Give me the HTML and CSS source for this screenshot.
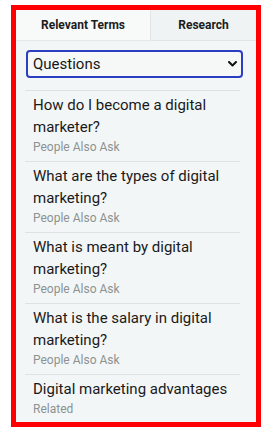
FILE: index.html
```html
<!DOCTYPE html>
<html>
<head>
<meta charset="utf-8">
<link rel="stylesheet" href="styles.css">
</head>
<body>
<div class="frame">
  <div class="panel">
    <div class="tabs">
      <div class="tab active">Relevant Terms</div>
      <div class="tab">Research</div>
    </div>
    <div class="content">
      <div class="select">
        <span>Questions</span>
        <svg class="chev" width="9" height="6" viewBox="0 0 9 6"><path d="M1 1 L4.5 4.5 L8 1" fill="none" stroke="#111" stroke-width="2" stroke-linecap="round" stroke-linejoin="round"/></svg>
      </div>
      <ul class="list">
        <li class="item"><div class="title">How do I become a digital marketer?</div><div class="sub">People Also Ask</div></li>
        <li class="item"><div class="title">What are the types of digital marketing?</div><div class="sub">People Also Ask</div></li>
        <li class="item"><div class="title">What is meant by digital marketing?</div><div class="sub">People Also Ask</div></li>
        <li class="item"><div class="title">What is the salary in digital marketing?</div><div class="sub">People Also Ask</div></li>
        <li class="item"><div class="title">Digital marketing advantages</div><div class="sub">Related</div></li>
      </ul>
    </div>
  </div>
</div>
</body>
</html>
```
FILE: styles.css
```css
html, body {
  margin: 0;
  padding: 0;
  background: #ffffff;
}
body {
  font-family: Roboto, "Liberation Sans", sans-serif;
  width: 272px;
  height: 431px;
  overflow: hidden;
}
.frame {
  margin: 5px 11px 0 11px;
  width: 240px;
  height: 412px;
  border: 5px solid #ff0000;
  overflow: hidden;
}
.panel {
  background: #f3f6f6;
  height: 100%;
}
.tabs {
  display: grid;
  grid-template-columns: 135px 105px;
  height: 31px;
}
.tab {
  display: flex;
  align-items: center;
  justify-content: center;
  font-size: 12px;
  font-weight: 700;
  color: #1c1c1c;
  background: #eff3f3;
  border-bottom: 1px solid #dfe5e5;
}
.tab.active {
  background: #f8fafa;
  border-right: 1px solid #e0e5e5;
  border-bottom: 1px solid #e3e8e8;
}
.content {
  padding: 9px 13px 0 10px;
}
.select {
  height: 24px;
  border: 2px solid #2c3fc2;
  border-radius: 4px;
  background: #f6f8f8;
  display: flex;
  align-items: center;
  justify-content: space-between;
  padding: 0 4px 0 5px;
  font-size: 15px;
  color: #161616;
}
.chev {
  display: block;
}
.list {
  list-style: none;
  margin: 12px 3px 0 -1px;
  padding: 0;
}
.item {
  border-top: 1px solid #dde2e2;
  padding: 3px 0 5px 8px;
}
.title {
  font-size: 15px;
  line-height: 22px;
  color: #1a1a1a;
}
.sub {
  font-size: 12px;
  line-height: 18px;
  color: #8c9292;
}
```
